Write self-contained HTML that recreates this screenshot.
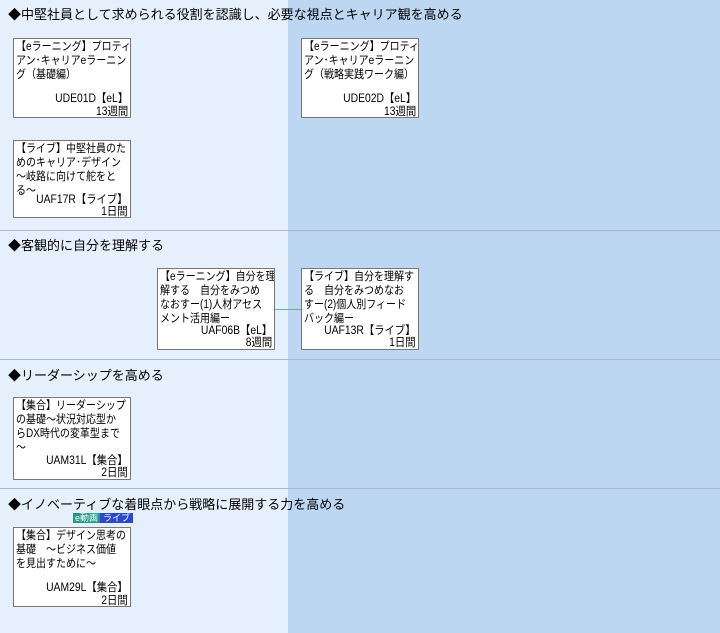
<!DOCTYPE html>
<html><head><meta charset="utf-8"><style>
body{margin:0;width:720px;height:633px;position:relative;overflow:hidden;background:#e5f0fc;font-family:"Liberation Sans","Noto Sans CJK JP",sans-serif;}
.r{position:absolute;left:288px;top:0;width:432px;height:633px;background:#bdd6f2;}
.hl{position:absolute;left:0;width:720px;height:1px;background:#a9b9cc;}
.h{position:absolute;left:8px;font-size:13px;color:#000;white-space:nowrap;line-height:16px;}
.b{position:absolute;width:118px;background:#fff;border:1px solid #777;font-size:11.5px;line-height:14px;color:#000;padding:1px 0 0 2px;box-sizing:border-box;overflow:hidden;}
.b .t{white-space:nowrap;transform:scaleX(.87);transform-origin:0 0;}
.b .c{position:absolute;right:2px;top:54px;line-height:13px;text-align:right;white-space:nowrap;transform:scaleX(.9);transform-origin:100% 0;}
.b .c4{top:56px;line-height:12px;}
</style></head><body>
<div class="r"></div>
<div class="hl" style="top:230px"></div>
<div class="hl" style="top:359px"></div>
<div class="hl" style="top:488px"></div>
<div class="h" style="top:7px">◆中堅社員として求められる役割を認識し、必要な視点とキャリア観を高める</div>
<div class="h" style="top:238px">◆客観的に自分を理解する</div>
<div class="h" style="top:368px">◆リーダーシップを高める</div>
<div class="h" style="top:497px">◆イノベーティブな着眼点から戦略に展開する力を高める</div>

<div class="b" style="left:13px;top:38px;height:80px"><div class="t">【eラーニング】プロティ<br>アン･キャリアeラーニン<br>グ（基礎編）</div><div class="c">UDE01D【eL】<br>13週間</div></div>
<div class="b" style="left:301px;top:38px;height:80px"><div class="t">【eラーニング】プロティ<br>アン･キャリアeラーニン<br>グ（戦略実践ワーク編）</div><div class="c">UDE02D【eL】<br>13週間</div></div>
<div class="b" style="left:13px;top:140px;height:78px"><div class="t">【ライブ】中堅社員のた<br>めのキャリア･デザイン<br>～岐路に向けて舵をと<br>る～</div><div class="c c4" style="top:53px">UAF17R【ライブ】<br>1日間</div></div>
<div style="position:absolute;left:274px;top:309px;width:28px;height:1px;background:#5cb88a"></div>
<div class="b" style="left:157px;top:268px;height:82px"><div class="t">【eラーニング】自分を理<br>解する　自分をみつめ<br>なおすー(1)人材アセス<br>メント活用編ー</div><div class="c c4">UAF06B【eL】<br>8週間</div></div>
<div class="b" style="left:301px;top:268px;height:82px"><div class="t">【ライブ】自分を理解す<br>る　自分をみつめなお<br>すー(2)個人別フィード<br>バック編ー</div><div class="c c4">UAF13R【ライブ】<br>1日間</div></div>
<div class="b" style="left:13px;top:397px;height:83px"><div class="t">【集合】リーダーシップ<br>の基礎～状況対応型か<br>らDX時代の変革型まで<br>～</div><div class="c c4" style="top:57px">UAM31L【集合】<br>2日間</div></div>
<div style="position:absolute;left:73px;top:513px;height:11px;font-size:9px;line-height:11px;color:#fff;white-space:nowrap"><span style="background:#1b9a8a;padding:0 2px">e動画</span><span style="background:#2c48c8;padding:0 3px">ライブ</span></div>
<div class="b" style="left:13px;top:527px;height:80px"><div class="t">【集合】デザイン思考の<br>基礎　～ビジネス価値<br>を見出すために～</div><div class="c">UAM29L【集合】<br>2日間</div></div>
</body></html>
